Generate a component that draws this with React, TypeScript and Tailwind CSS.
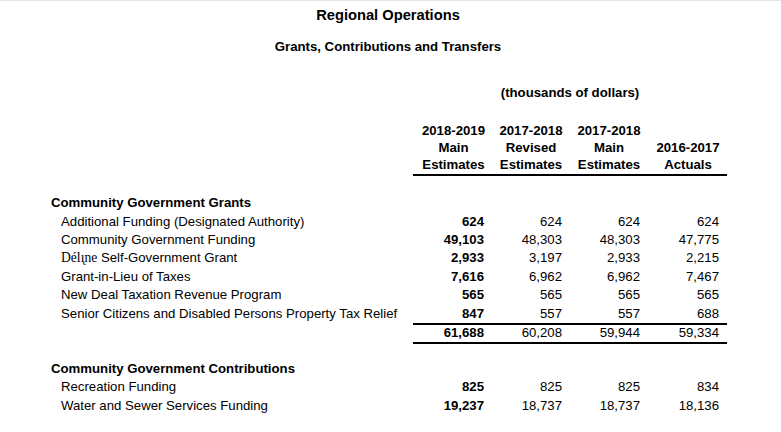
const grants: [React.ReactNode, string, string, string, string][] = [
  ["Additional Funding (Designated Authority)", "624", "624", "624", "624"],
  ["Community Government Funding", "49,103", "48,303", "48,303", "47,775"],
  [
    <>
      <span className="font-['Liberation_Serif',serif] text-[13.6px]">Délı̨ne</span> Self-Government Grant
    </>,
    "2,933",
    "3,197",
    "2,933",
    "2,215",
  ],
  ["Grant-in-Lieu of Taxes", "7,616", "6,962", "6,962", "7,467"],
  ["New Deal Taxation Revenue Program", "565", "565", "565", "565"],
  ["Senior Citizens and Disabled Persons Property Tax Relief", "847", "557", "557", "688"],
];

const contributions: [React.ReactNode, string, string, string, string][] = [
  ["Recreation Funding", "825", "825", "825", "834"],
  ["Water and Sewer Services Funding", "19,237", "18,737", "18,737", "18,136"],
];

function Nums({ v, className = "" }: { v: string[]; className?: string }) {
  return (
    <div className={`flex w-[314px] ${className}`}>
      {v.map((n, i) => (
        <div
          key={i}
          className={`${i === 3 ? "w-[80px] pr-[8px]" : "w-[78px] pr-[7px]"} text-right ${i === 0 ? "font-bold" : ""}`}
        >
          {n}
        </div>
      ))}
    </div>
  );
}

function Row({ label, v }: { label: React.ReactNode; v: string[] }) {
  return (
    <div className="flex h-[18.4px] items-center">
      <div className="w-[362px] pl-[10px]">{label}</div>
      <Nums v={v} />
    </div>
  );
}

export default function App() {
  return (
    <div className="h-[432px] w-[781px] overflow-hidden border-t border-[#e6e6e6] bg-white font-['Liberation_Sans',Arial,sans-serif] text-[13.2px] text-black">
      <div className="pr-[5px] pt-[5px] text-center">
        <h1 className="text-[14.7px] font-bold leading-[18px]">Regional Operations</h1>
        <h2 className="mt-[15px] font-bold leading-[16px]">Grants, Contributions and Transfers</h2>
      </div>

      <div className="ml-[51px]">
        <div className="mt-[30px] flex leading-[16px]">
          <div className="w-[362px]" />
          <div className="w-[314px] text-center font-bold">(thousands of dollars)</div>
        </div>

        <div className="mt-[21px] flex">
          <div className="w-[362px]" />
          <div className="flex w-[314px] border-b-2 border-black pb-px text-center font-bold leading-[17px]">
            <div className="w-[78px] pl-[3px]">
              2018-2019
              <br />
              Main
              <br />
              Estimates
            </div>
            <div className="w-[78px] pl-[2px]">
              2017-2018
              <br />
              Revised
              <br />
              Estimates
            </div>
            <div className="w-[78px] pl-[2px]">
              2017-2018
              <br />
              Main
              <br />
              Estimates
            </div>
            <div className="w-[80px] pl-[2px]">
              <br />
              2016-2017
              <br />
              Actuals
            </div>
          </div>
        </div>

        <div className="mt-[18px] h-[18.4px] font-bold leading-[18.4px]">Community Government Grants</div>
        {grants.map(([label, ...v], i) => (
          <Row key={i} label={label} v={v} />
        ))}
        <div className="flex">
          <div className="w-[362px]" />
          <Nums
            v={["61,688", "60,208", "59,944", "59,334"]}
            className="h-[21px] items-center border-y-2 border-black"
          />
        </div>

        <div className="mt-[16px] h-[18.4px] font-bold leading-[18.4px]">Community Government Contributions</div>
        {contributions.map(([label, ...v], i) => (
          <Row key={i} label={label} v={v} />
        ))}
      </div>
    </div>
  );
}
